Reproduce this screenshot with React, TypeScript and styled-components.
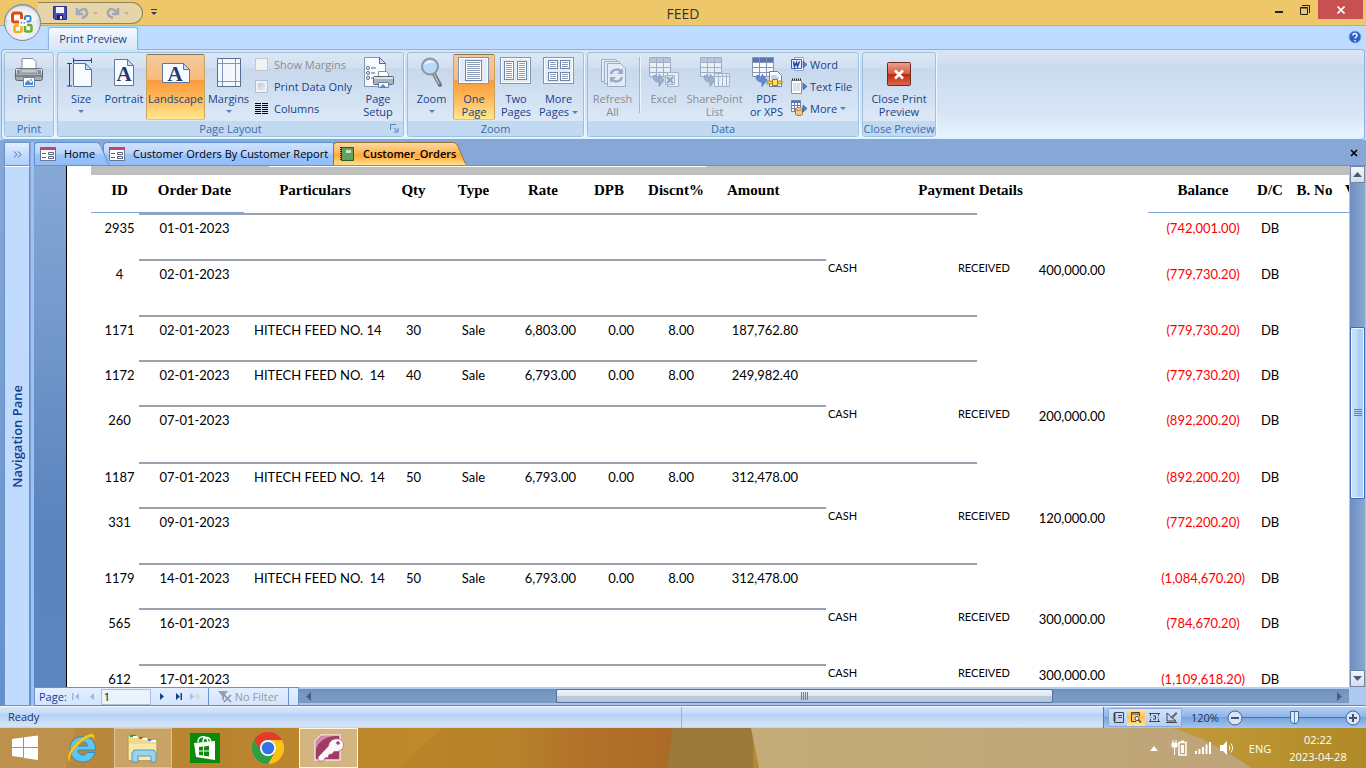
import React from "react";
import styled, { createGlobalStyle, css } from "styled-components";

const GlobalStyle = createGlobalStyle`
  * { box-sizing: border-box; }
  html, body, #root { height: 100%; }
  body { margin: 0; overflow: hidden; font-family: "Open Sans", "Noto Sans", sans-serif; font-size: 11px; line-height: 13px; color: #15428b; }
  button, input { font: inherit; color: inherit; }
  button { border: 0; padding: 0; background: none; white-space: nowrap; }
  svg { display: block; flex: none; }
`;

const Window = styled.div`
  display: flex;
  flex-direction: column;
  height: 100vh;
  background: #bfdbff;
  position: relative;
`;

/* ---------- title bar ---------- */
const TitleBar = styled.header`
  display: grid;
  grid-template-columns: 1fr auto 1fr;
  height: 26px;
  flex: none;
  background: #efc76b;
  border-bottom: 1px solid #c9ab67;
`;
const TitleText = styled.h1`
  margin: 0;
  font-size: 14px;
  line-height: 27px;
  font-weight: 400;
  color: #333;
`;
const QuickBar = styled.div`
  display: flex;
  align-items: flex-start;
  padding: 2px 0 0 38px;
`;
const QuickPill = styled.div`
  display: flex;
  align-items: center;
  gap: 4px;
  width: 105px;
  height: 22px;
  padding-left: 15px;
  background: #e5d5a8;
  border: 1px solid #8c8467;
  border-left: 0;
  border-radius: 0 11px 11px 0;
`;
const QuickMore = styled.button`
  margin: 7px 0 0 8px;
`;
const WindowButtons = styled.div`
  display: flex;
  justify-content: flex-end;
  padding-right: 3px;
`;
const WindowButton = styled.button<{ $close?: boolean }>`
  display: flex;
  align-items: center;
  justify-content: center;
  width: ${(p) => (p.$close ? 45 : 26)}px;
  height: 19px;
  background: ${(p) => (p.$close ? "#c75050" : "none")};
`;
const OfficeButton = styled.button`
  position: absolute;
  left: 3px;
  top: 3px;
`;

/* ---------- ribbon ---------- */
const TabStrip = styled.nav`
  display: flex;
  justify-content: space-between;
  align-items: flex-start;
  height: 23px;
  flex: none;
  padding: 1px 4px 0 48px;
`;
const RibbonTab = styled.button`
  height: 23px;
  width: 90px;
  padding-bottom: 1px;
  background: linear-gradient(#f5faff, #e1ecf9 60%, #dbe6f4);
  border: 1px solid #8db2e3;
  border-bottom: 0;
  border-radius: 3px 3px 0 0;
  box-shadow: 0 0 3px #7fe8ff;
  z-index: 1;
`;
const HelpButton = styled.button`
  margin-top: 3px;
`;
const Ribbon = styled.section`
  display: flex;
  gap: 3px;
  flex: none;
  height: 91px;
  margin: 0 1px 0 1px;
  padding: 2px;
  background: linear-gradient(#dbe6f4, #cfddee 16%, #c9daee 18%, #d8e6f6 75%, #e5f4ff 95%, #d5f3ff);
  border: 1px solid #8db2e3;
  border-bottom-color: #86a9d4;
  border-radius: 4px;
`;
const GroupBox = styled.section<{ $w: number }>`
  display: flex;
  flex-direction: column;
  width: ${(p) => p.$w}px;
  height: 85px;
  border: 1px solid #9fbfdf;
  border-radius: 3px;
  background: linear-gradient(#dde8f5, #d0dff0 18%, #c7d8ed 19%, #dce9f7 85%);
  box-shadow: 1px 1px 0 #eef6ff;
`;
const GroupBody = styled.div`
  display: flex;
  flex: 1;
  padding: 1px 2px 0;
`;
const GroupLabel = styled.h2`
  display: flex;
  align-items: center;
  justify-content: center;
  position: relative;
  margin: 0;
  height: 15px;
  font-size: 11px;
  font-weight: 400;
  white-space: nowrap;
  color: #3e6aaa;
  background: #c1d9f1;
  border-radius: 0 0 2px 2px;
`;
const Launcher = styled.button`
  position: absolute;
  right: 4px;
  top: 3px;
`;
const BigButton = styled.button<{ $w: number; $on?: boolean }>`
  display: flex;
  flex-direction: column;
  align-items: center;
  width: ${(p) => p.$w}px;
  height: 66px;
  padding-top: 1px;
  line-height: 13px;
  border: 1px solid transparent;
  &:disabled { color: #8d8d8d; }
  &:disabled svg { opacity: 0.65; }
  ${(p) =>
    p.$on &&
    css`
      background: linear-gradient(#f2c9a0, #fbb97c 38%, #fb9a3b 40%, #fdc264 75%, #ffe98c);
      border-color: #8b7654 #c9a35b #e8c75d;
      border-radius: 2px;
    `}
`;
const BigLabel = styled.span`
  margin-top: 4px;
  text-align: center;
  svg { display: inline-block; vertical-align: 2px; margin-left: 3px; }
`;
const Stack = styled.div<{ $w: number }>`
  display: flex;
  flex-direction: column;
  width: ${(p) => p.$w}px;
  padding-left: 3px;
`;
const SmallButton = styled.button`
  display: flex;
  align-items: center;
  gap: 3px;
  height: 22px;
  padding-bottom: 2px;
`;
const CheckLabel = styled.label<{ $off?: boolean }>`
  display: flex;
  align-items: center;
  gap: 6px;
  height: 22px;
  padding-bottom: 2px;
  white-space: nowrap;
  color: ${(p) => (p.$off ? "#8d8d8d" : "#15428b")};
`;
const CheckBox = styled.input`
  appearance: none;
  width: 13px;
  height: 13px;
  margin: 0;
  border: 1px solid #abc1de;
  background: linear-gradient(135deg, #b9bec6, #f7f7f7);
  box-shadow: inset 0 0 0 2px #eef1f5;
  &:disabled { background: #f3f3f3; border-color: #c0c8d3; }
`;
const Divider = styled.div`
  width: 1px;
  height: 56px;
  margin: 3px 3px 0 4px;
  background: #9db8d8;
  box-shadow: 1px 0 0 #eef5fc;
`;

/* ---------- work area ---------- */
const Work = styled.main`
  display: flex;
  flex: 1;
  min-height: 0;
  padding: 2px 0 0 4px;
  background: linear-gradient(#87a8d6, #6490c9);
`;
const NavPane = styled.aside`
  display: flex;
  flex-direction: column;
  width: 30px;
  padding-right: 1px;
  border-right: 3px solid #9dc1f5;
`;
const NavToggle = styled.button`
  height: 24px;
  border: 1px solid #6593cf;
  background: linear-gradient(#e3efff, #c4ddff 50%, #aed0ff);
  display: flex;
  align-items: center;
  justify-content: center;
`;
const NavBody = styled.button`
  flex: 1;
  border: 1px solid #6593cf;
  border-top-color: #fff;
  background: #c1dbff;
  font-size: 13px;
  font-weight: 600;
  display: flex;
  align-items: center;
  justify-content: center;
  span { writing-mode: vertical-rl; transform: rotate(180deg); }
`;
const DocColumn = styled.section`
  display: flex;
  flex-direction: column;
  flex: 1;
  min-width: 0;
`;
const DocTabs = styled.nav`
  display: flex;
  height: 24px;
  flex: none;
  background: #87a8d6;
  border-bottom: 1px solid #6593cf;
`;
const DocTab = styled.button<{ $w: number; $active?: boolean }>`
  display: flex;
  align-items: center;
  gap: 8px;
  width: ${(p) => p.$w}px;
  padding: 0 0 1px 5px;
  color: #000;
  z-index: ${(p) => (p.$active ? 2 : 0)};
  font-weight: ${(p) => (p.$active ? 600 : 400)};
  background: ${(p) =>
    p.$active
      ? "linear-gradient(#ffd9a0, #ffb658 45%, #ffa83a 55%, #ffe08a)"
      : "linear-gradient(#cfe2fc, #b9d5fb 45%, #9cc4fa 55%, #92bcf8)"};
  border: 1px solid ${(p) => (p.$active ? "#96703a" : "#5f8fd0")};
  border-width: 1px 0 0 1px;
  border-radius: 4px 0 0 0;
`;
const TabTail = styled.svg<{ $overlap: number }>`
  margin-right: -${(p) => p.$overlap}px;
  z-index: 1;
`;
const DocClose = styled.button`
  margin: 0 8px 1px auto;
`;
const Frame = styled.div`
  display: grid;
  grid-template-columns: 1fr 17px;
  grid-template-rows: 1fr 19px;
  flex: 1;
  min-height: 0;
`;
const Viewport = styled.div`
  overflow: hidden;
  min-width: 0;
  padding-left: 32px;
  background: linear-gradient(#87a8d6, #5a84be 70%, #5c86c0);
`;
const Paper = styled.article`
  height: 100%;
  padding-left: 24px;
  background: #fff;
  border-left: 1px solid #000;
`;
const Band = styled.div`
  height: 9px;
  background: linear-gradient(#fff, #fff) 178px 0 / 437px 1px no-repeat #bfbfbf;
`;

/* ---------- report ---------- */
const Report = styled.table`
  table-layout: fixed;
  width: 1309px;
  border-collapse: separate;
  border-spacing: 0;
  font-family: Lato, sans-serif;
  font-size: 13px;
  line-height: 16px;
  color: #000;
`;
const Head = styled.th<{ $line?: boolean; $align?: string; $pl?: number }>`
  height: 38px;
  padding: 7px 0 0 ${(p) => p.$pl || 0}px;
  vertical-align: top;
  text-align: ${(p) => p.$align || "center"};
  font-family: "Liberation Serif", serif;
  font-size: 15px;
  white-space: nowrap;
  border-bottom: 1px solid ${(p) => (p.$line ? "#7ba7dc" : "#fff")};
`;
const Row = styled.tr<{ $h: number }>`
  height: ${(p) => p.$h}px;
`;
const Cell = styled.td<{ $rule?: boolean; $align?: string; $pl?: number; $pr?: number; $red?: boolean }>`
  padding: 5px ${(p) => p.$pr || 0}px 0 ${(p) => p.$pl || 0}px;
  vertical-align: top;
  text-align: ${(p) => p.$align || "center"};
  white-space: pre;
  color: ${(p) => (p.$red ? "#f00" : "inherit")};
  border-top: 2px solid ${(p) => (p.$rule ? "#9ca1ae" : "transparent")};
`;
const NoteCell = styled.td`
  padding: 1px 5px 0 2px;
  vertical-align: top;
  font-size: 11px;
`;
const Note = styled.div`
  display: flex;
  justify-content: space-between;
`;
const PaidCell = styled.td`
  padding: 3px 10px 0 0;
  vertical-align: top;
  text-align: right;
`;

/* ---------- scroll bars ---------- */
const VScroll = styled.div`
  display: flex;
  flex-direction: column;
  background: linear-gradient(90deg, #6d90c2, #7b9bc8 50%, #89a7d0);
  border: 1px solid #a9c4ec;
  border-width: 0 1px;
`;
const HScroll = styled.div`
  display: flex;
  align-items: center;
  flex: 1;
  background: linear-gradient(#6d90bc, #7a9ac5 50%, #7a9ac5);
  border-top: 2px solid #b5cdf0;
  border-bottom: 2px solid #a9c4ec;
`;
const Corner = styled.div`
  background: #afcaf0;
  border-bottom: 1px solid #5f88bb;
`;
const ScrollButton = styled.button<{ $plain?: boolean }>`
  display: flex;
  align-items: center;
  justify-content: center;
  flex: none;
  width: ${(p) => (p.$plain ? "19px" : "auto")};
  height: 17px;
  ${(p) =>
    !p.$plain &&
    css`
      border: 1px solid #6f83a3;
      background: linear-gradient(#f4f7fb, #d3deec);
    `}
`;
const Space = styled.div<{ $grow: number }>`
  flex: ${(p) => p.$grow} 1 0;
`;
const Thumb = styled.div<{ $grow: number; $hot?: boolean }>`
  display: flex;
  align-items: center;
  justify-content: center;
  flex: ${(p) => p.$grow} 1 0;
  height: 100%;
  border: 1px solid #53709b;
  border-radius: 2px;
  background: linear-gradient(#f3f5f9, #dde5ef 48%, #b9cbe0 52%, #b4c5da);
  ${(p) =>
    p.$hot &&
    css`
      height: auto;
      border-color: #3b6cb7;
      box-shadow: inset 0 0 0 1px #eef5ff;
      background: linear-gradient(90deg, #c9defa, #c4dbfa 48%, #a8cbf8 52%, #b5d4fb);
    `}
`;

/* ---------- record navigator ---------- */
const BottomRow = styled.div`
  display: flex;
  min-width: 0;
  border-bottom: 1px solid #5f88bb;
`;
const PageNav = styled.form`
  display: flex;
  align-items: center;
  width: 265px;
  padding-left: 4px;
  border: 1px solid #6593cf;
  border-width: 1px 1px 0 1px;
  background: linear-gradient(#e3efff, #d3e5ff);
`;
const PageInput = styled.input`
  width: 50px;
  height: 16px;
  margin: 0 3px 0 2px;
  padding: 0 2px;
  color: #000;
  border: 1px solid #abc1de;
  background: #eaf2fb;
`;
const NavIcon = styled.button<{ $w: number }>`
  display: flex;
  align-items: center;
  justify-content: center;
  width: ${(p) => p.$w}px;
  height: 16px;
`;
const Filter = styled.button`
  display: flex;
  align-items: center;
  gap: 3px;
  width: 81px;
  height: 100%;
  margin-left: 4px;
  padding-left: 9px;
  color: #9a9a9a;
  border: 1px solid #6593cf;
  border-width: 0 1px;
`;

/* ---------- status bar ---------- */
const StatusBar = styled.footer`
  display: flex;
  height: 22px;
  flex: none;
  line-height: 20px;
  border-top: 1px solid #f2f7ff;
  background: linear-gradient(#d7e6f9, #c6dcf8 30%, #b3d0f5 34%, #d7e5f7 90%, #b9cfee);
`;
const StatusText = styled.div`
  flex: 1;
  padding-left: 8px;
  color: #1c3564;
  border-right: 1px solid #90b3e0;
`;
const StatusFill = styled.div`
  flex: 0 1 421px;
`;
const StatusTools = styled.div`
  display: flex;
  align-items: center;
  width: 263px;
  padding: 0 5px 0 4px;
  color: #1c3564;
  border-left: 1px solid #567db1;
  background: linear-gradient(#b3d0f5, #8fb5ea 45%, #79a5df 50%, #a5c5ef);
`;
const ViewButtons = styled.div`
  display: flex;
  margin-right: 9px;
  border: 1px solid #86a9d6;
  border-radius: 2px;
`;
const ViewButton = styled.button<{ $on?: boolean }>`
  display: flex;
  align-items: center;
  justify-content: center;
  width: 18px;
  height: 17px;
  background: ${(p) => (p.$on ? "linear-gradient(#ffe3a8, #ffc04f 50%, #ffe69a)" : "linear-gradient(#d2e3fa, #b3cff5)")};
`;
const ZoomSlider = styled.input`
  appearance: none;
  flex: 1;
  min-width: 0;
  height: 14px;
  margin: 0;
  background: linear-gradient(#4f72a4, #4f72a4) center / 100% 1px no-repeat;
  &::-webkit-slider-thumb {
    appearance: none;
    width: 9px;
    height: 13px;
    background: linear-gradient(90deg, #dfeaf8 3px, #5f82b5 3px, #5f82b5 4px, #dfeaf8 4px);
    border: 1px solid #44689c;
    border-radius: 1px 1px 5px 5px;
  }
`;
const ZoomValue = styled.span`
  width: 36px;
`;

/* ---------- task bar ---------- */
const TaskBar = styled.footer`
  position: relative;
  display: flex;
  align-items: stretch;
  height: 40px;
  flex: none;
  overflow: hidden;
  background: #b98730;
`;
const Wallpaper = styled.svg`
  position: absolute;
  inset: 0;
  width: 100%;
  height: 100%;
`;
const TaskButton = styled.button<{ $w: number; $open?: boolean; $active?: boolean }>`
  position: relative;
  display: flex;
  align-items: center;
  justify-content: center;
  width: ${(p) => p.$w}px;
  border: 1px solid ${(p) => (p.$active ? "#fff6df" : p.$open ? "#dcc49a" : "transparent")};
  background: ${(p) => (p.$active ? "#d2b580" : p.$open ? "#c9a468" : "none")};
`;
const Tray = styled.div`
  position: relative;
  display: flex;
  align-items: center;
  margin-left: auto;
  padding-right: 19px;
  color: #fff;
`;
const TrayItem = styled.button<{ $w: number }>`
  display: flex;
  justify-content: center;
  width: ${(p) => p.$w}px;
`;
const Clock = styled.time`
  width: 58px;
  margin-left: 9px;
  text-align: center;
  line-height: 17px;
  white-space: nowrap;
`;

/* ---------- icons ---------- */
const Down = ({ w = 6, c = "#5a7fb5" }: { w?: number; c?: string }) => (
  <svg width={w} height="3" viewBox="0 0 6 3"><path d="M0 0h6L3 3z" fill={c} /></svg>
);
const Orb = () => (
  <svg width="39" height="39" viewBox="0 0 39 39">
    <defs>
      <radialGradient id="orb" cx="50%" cy="65%" r="65%">
        <stop offset="0" stopColor="#fff" /><stop offset=".65" stopColor="#e6e9ee" /><stop offset="1" stopColor="#a9b1bf" />
      </radialGradient>
    </defs>
    <circle cx="19.5" cy="19.5" r="18" fill="url(#orb)" stroke="#7b8798" />
    <path d="M3 16a17 17 0 0 1 33 0c-9 4-24 4-33 0z" fill="#fff" opacity=".6" />
    <g fill="none">
      <path d="M16 19h-4.500a2 2 0 0 1-2-2v-4.500a2.500 2.500 0 0 1 2.500-2.500h4.500a2 2 0 0 1 2 2V16" stroke="#dc4a15" strokeWidth="3" />
      <path d="M18.500 23v4.500a1.500 1.500 0 0 1-1.500 1.500h-4a1.500 1.500 0 0 1-1.500-1.500V24a1.500 1.500 0 0 1 1.500-1.500h3" stroke="#f0b018" strokeWidth="2.500" />
      <path d="M22 23v4a1.500 1.500 0 0 0 1.500 1.500H27a1.500 1.500 0 0 0 1.500-1.500v-3.500a1.500 1.500 0 0 0-1.500-1.500h-3" stroke="#6bab35" strokeWidth="2.500" />
      <path d="M22 17v-2.500a1.500 1.500 0 0 1 1.500-1.500H26a1.500 1.500 0 0 1 1.500 1.500V17a1.500 1.500 0 0 1-1.500 1.500h-2.500" stroke="#3c88d0" strokeWidth="2" />
    </g>
    <path d="M17.500 19h1.500v1.500h-1.500zM20.500 19H22v1.500h-1.500z" fill="#4d90d0" />
  </svg>
);
const Save = () => (
  <svg width="14" height="14" viewBox="0 0 14 14">
    <path d="M.5.5h13v13H2L.5 12z" fill="#4a4fb8" stroke="#2c2f83" />
    <path d="M3 1h8v6H3z" fill="#eef2fb" /><path d="M4 9h6v4H4z" fill="#1f2160" /><path d="M7 10h2v3H7z" fill="#fff" />
  </svg>
);
const Undo = ({ flip }: { flip?: boolean }) => (
  <svg width="14" height="14" viewBox="0 0 14 14">
    <g transform={flip ? "matrix(-1 0 0 1 14 0)" : undefined} fill="none" stroke="#9ea8b6" strokeWidth="2.500">
      <path d="M2 2v6h6" />
      <path d="M3 7c3-5 8-5 9-1 .5 3-2 5-5 6" />
    </g>
  </svg>
);
const Printer = () => (
  <svg width="32" height="32" viewBox="0 0 32 32">
    <path d="M9 2.500h11l3 3v9H9z" fill="#fff" stroke="#8390a3" />
    <rect x="2.500" y="12.500" width="27" height="12" rx="2" fill="#a8adb4" stroke="#5e6670" />
    <path d="M3 13h26v4H3z" fill="#dfe2e6" /><path d="M8 13h16v4H8z" fill="#c5c9cf" stroke="#8a9099" />
    <path d="M3 19h26v2H3z" fill="#7d848d" />
    <path d="M4 14h3v4H4zM25 14h3v4h-3z" fill="#858c95" />
    <path d="M10.500 21.500h11v9h-11z" fill="#f4faff" stroke="#6483ad" />
    <path d="M12 27l3-3 3 3 2-2v4h-8z" fill="#4a8bd5" /><circle cx="18" cy="24" r="1" fill="#e47b40" />
  </svg>
);
const SizeIcon = () => (
  <svg width="32" height="32" viewBox="0 0 32 32">
    <path d="M8.500 7.500h12l6 6v17h-18z" fill="#f8fbff" stroke="#5f7799" /><path d="M20.500 7.500v6h6z" fill="#c9dcf3" stroke="#5f7799" />
    <path d="M8 4.500h19M8.500 2v5M26.500 2v5M4.500 7v23M2 7.500h5M2 30h5" stroke="#2b3f8e" fill="none" />
  </svg>
);
const LetterA = ({ x, y }: { x: number; y: number }) => (
  <text x={x} y={y} textAnchor="middle" fontFamily="Liberation Serif, serif" fontWeight="700" fontSize="21" fill="#253a70">A</text>
);
const PortraitIcon = () => (
  <svg width="32" height="32" viewBox="0 0 32 32">
    <path d="M6.500 3.500h13l6 6v20h-19z" fill="#f8fbff" stroke="#5f7799" /><path d="M19.500 3.500v6h6z" fill="#c9dcf3" stroke="#5f7799" />
    <LetterA x={16} y={25} />
  </svg>
);
const LandscapeIcon = () => (
  <svg width="32" height="32" viewBox="0 0 32 32">
    <path d="M2.500 7.500h21l6 6v13h-27z" fill="#f8fbff" stroke="#5f7799" /><path d="M23.500 7.500v6h6z" fill="#c9dcf3" stroke="#5f7799" />
    <LetterA x={15} y={25} />
  </svg>
);
const MarginsIcon = () => (
  <svg width="32" height="32" viewBox="0 0 32 32">
    <path d="M4.500 2.500h23v28h-23z" fill="#f4f8fe" stroke="#566f96" />
    <path d="M9.500 3v27M22.500 3v27M5 7.500h22M5 25.500h22" stroke="#7f97bb" />
  </svg>
);
const SetupIcon = () => (
  <svg width="32" height="32" viewBox="0 0 32 32">
    <path d="M2.500 1.500h15l6 6v23h-21z" fill="#f8fbff" stroke="#8495ae" /><path d="M17.500 1.500v6h6z" fill="#d4e2f4" stroke="#52688c" />
    <g fill="#fff" stroke="#4f6587"><circle cx="6" cy="12" r="1.500" /><circle cx="6" cy="17" r="1.500" /><circle cx="6" cy="22" r="1.500" /></g>
    <path d="M9 12h5M9 17h4M9 22h2" stroke="#52688c" />
    <path d="M16.500 15.500h8l2 2v5h-10z" fill="#fff" stroke="#8390a3" />
    <rect x="11.500" y="20.500" width="20" height="8" rx="1" fill="#aeb3ba" stroke="#5e6670" />
    <path d="M12 21h19v2H12z" fill="#dfe2e6" /><path d="M16.500 26.500h10v5h-10z" fill="#f4faff" stroke="#6483ad" />
    <path d="M18 31l3-3 3 3z" fill="#4a8bd5" />
  </svg>
);
const ZoomIcon = () => (
  <svg width="32" height="32" viewBox="0 0 32 32">
    <path d="M18 18l6 11" stroke="#6f7780" strokeWidth="4" strokeLinecap="round" /><path d="M18 18l5 10" stroke="#b9bec5" strokeWidth="1.500" />
    <circle cx="14" cy="10.500" r="8" fill="#b8dcf8" stroke="#8993a3" strokeWidth="2" />
    <path d="M8.500 9c1-4 7-6 10-2-4-1-7 0-10 2z" fill="#fff" opacity=".8" />
  </svg>
);
const MiniPage = ({ x, y, w, h }: { x: number; y: number; w: number; h: number }) => (
  <g>
    <rect x={x + 0.5} y={y + 0.5} width={w} height={h} fill="#fff" stroke="#6f87ac" />
    {Array.from({ length: Math.floor((h - 2) / 2) }, (_, i) => (
      <path key={i} d={`M${x + 2} ${y + 2.5 + i * 2}h${w - 3}`} stroke="#8c9cb8" />
    ))}
  </g>
);
const PagesIcon = ({ kind }: { kind: 1 | 2 | 4 }) => (
  <svg width="32" height="32" viewBox="0 0 32 32">
    <rect x="0.500" y="1.500" width="30" height="26" fill="#e3ebf6" stroke="#7e95b8" />
    <rect x="1.500" y="2.500" width="28" height="24" fill="none" stroke="#fff" />
    {kind === 1 && <MiniPage x={7} y={4} w={16} h={20} />}
    {kind === 2 && <><MiniPage x={4} y={5} w={9} h={18} /><MiniPage x={17} y={5} w={9} h={18} /></>}
    {kind === 4 && <><MiniPage x={5} y={4} w={9} h={8} /><MiniPage x={17} y={4} w={9} h={8} /><MiniPage x={5} y={16} w={9} h={8} /><MiniPage x={17} y={16} w={9} h={8} /></>}
  </svg>
);
const RefreshIcon = () => (
  <svg width="32" height="32" viewBox="0 0 32 32">
    <g fill="#eef3f9" stroke="#7f93b0">
      <path d="M4.500 3.500h14l4 4v18h-18z" /><path d="M7.500 5.500h14l4 4v18h-18z" /><path d="M10.500 7.500h13l5 5v18h-18z" />
    </g>
    <g fill="none" stroke="#7d92b4" strokeWidth="2.500"><path d="M14 18c1-5 8-6 10-2M25 21c-1 5-8 6-10 2" /></g>
    <path d="M26 12v6h-6zM13 27v-6h6z" fill="#7d92b4" />
  </svg>
);
const Grid = ({ head = "#a9b2c4" }: { head?: string }) => (
  <g>
    <path d="M1.500 1.500h21v19h-21z" fill="#f6f9fd" stroke="#8795b0" /><path d="M2 2h20v4H2z" fill={head} />
    <path d="M1.500 6.500h21M1.500 11.500h21M1.500 16.500h21M8.500 2v18M15.500 2v18" stroke="#8795b0" />
  </g>
);
const Arrow = ({ c }: { c: string }) => (
  <path d="M5 20c0 4 2 6 6 6v4.500l5-6.500-5-6v4c-2 0-3-1-3-3z" fill={c} stroke="#5a73a5" strokeWidth=".7" />
);
const ExcelIcon = () => (
  <svg width="32" height="32" viewBox="0 0 32 32">
    <Grid /><Arrow c="#8398bd" /><path d="M19.500 16.500h11v14h-11z" fill="#f7f9fb" stroke="#909eb3" />
    <path d="M17.500 19.500h9v9h-9z" fill="#e8edf3" stroke="#909eb3" /><path d="M19 21l6 6M25 21l-6 6" stroke="#76869d" strokeWidth="2" />
  </svg>
);
const ShareIcon = () => (
  <svg width="32" height="32" viewBox="0 0 32 32">
    <Grid /><Arrow c="#8398bd" /><path d="M15.500 17.500h15v13h-15z" fill="#f7f9fb" stroke="#909eb3" />
    <path d="M15.500 20.500h15M19.500 18v12M23.500 18v12M27.500 18v12" stroke="#909eb3" />
  </svg>
);
const PdfIcon = () => (
  <svg width="32" height="32" viewBox="0 0 32 32">
    <Grid head="#5874b4" /><Arrow c="#5c8be0" />
    <path d="M18.500 15.500h8l4 4v11h-12z" fill="#fff" stroke="#6b7f9f" /><path d="M20 20h6M20 22h8" stroke="#9aa9c0" />
    <path d="M16 25h15v3H16z" fill="#f4c63b" stroke="#a87b10" strokeWidth=".8" /><rect x="21.500" y="23.500" width="5" height="6" fill="#ffdf6b" stroke="#a87b10" />
  </svg>
);
const BlueTip = () => <path d="M12 5l4 3.500-4 3.500z" fill="#4c7fd8" stroke="#274f9c" strokeWidth=".6" />;
const WordIcon = () => (
  <svg width="16" height="16" viewBox="0 0 16 16">
    <path d="M3.500 1.500h9v13h-9z" fill="#fff" stroke="#8ea3c5" /><path d="M.5 3.500h10v9H.5z" fill="#e8effb" stroke="#3b62b0" />
    <path d="M2.500 5.500l1 5 2-4 1 4 2-5" fill="none" stroke="#1f49a4" strokeWidth="1.500" /><BlueTip />
  </svg>
);
const TextIcon = () => (
  <svg width="16" height="16" viewBox="0 0 16 16">
    <path d="M.5 2.500h10v13H.5z" fill="#fff" stroke="#8a93a5" /><path d="M1 1.500h10" stroke="#222" strokeWidth="2" strokeDasharray="1 1" />
    <path d="M2 6h7M2 8h7M2 10h7M2 12h7" stroke="#a9b5ca" strokeWidth=".8" /><BlueTip />
  </svg>
);
const MoreIcon = () => (
  <svg width="16" height="16" viewBox="0 0 16 16">
    <path d="M.5.5h9v11h-9z" fill="#fff" stroke="#6d82a8" /><path d="M1 1h8v2H1z" fill="#5874b4" /><path d="M1 5.500h8M1 8.500h8M3.500 1v10M6.500 1v10" stroke="#6d82a8" />
    <path d="M4.500 9v5c0 2 7 2 7 0V9z" fill="#f0c680" stroke="#a9782c" /><ellipse cx="8" cy="9" rx="3.500" ry="1.300" fill="#fbe3b4" stroke="#a9782c" /><BlueTip />
  </svg>
);
const ColumnsIcon = () => (
  <svg width="13" height="13" viewBox="0 0 13 13"><path d="M0 1.500h6M7 1.500h6M0 3.500h6M7 3.500h6M0 5.500h6M7 5.500h6M0 7.500h6M7 7.500h6M0 9.500h6M7 9.500h6M0 11.500h6M7 11.500h6" stroke="#000" /></svg>
);
const CloseIcon = () => (
  <svg width="32" height="32" viewBox="0 0 32 32">
    <defs><linearGradient id="cls" x2="0" y2="1"><stop offset="0" stopColor="#eba394" /><stop offset=".5" stopColor="#d9583f" /><stop offset=".52" stopColor="#bd2a12" /><stop offset="1" stopColor="#dd6a4c" /></linearGradient></defs>
    <rect x="4.500" y="6.500" width="23" height="23" rx="1" fill="url(#cls)" stroke="#6b2a23" />
    <path d="M12 14.500l8 8M20 14.500l-8 8" stroke="#fff" strokeWidth="2.500" />
  </svg>
);
const FormIcon = () => (
  <svg width="16" height="16" viewBox="0 0 16 16">
    <path d="M.5 1.500h15v13H.5z" fill="#fff" stroke="#67758f" /><path d="M0 1h16v3H0z" fill="#c4426b" />
    <path d="M2 7.500h4M2 11.500h4" stroke="#56657f" /><path d="M8.500 6.500h5v2h-5zM8.500 10.500h5v2h-5z" fill="none" stroke="#56657f" />
  </svg>
);
const BookIcon = () => (
  <svg width="16" height="16" viewBox="0 0 16 16">
    <path d="M2.500 1.500h12v13h-12z" fill="#5fa160" stroke="#2e5b33" /><path d="M2 1v14" stroke="#1d2b1d" strokeWidth="2" strokeDasharray="1 1" />
    <path d="M7 4h5v3H7z" fill="#c9e6c3" />
  </svg>
);
const OneDoc = () => (
  <svg width="11" height="11" viewBox="0 0 11 11"><path d="M1.500.5h9v10h-9z" fill="none" stroke="#444" /><path d="M0 2h3M0 4h3M0 6h3M0 8h3M5 3.500h4M5 5.500h4" stroke="#444" /></svg>
);
const PreviewDoc = () => (
  <svg width="12" height="11" viewBox="0 0 12 11"><path d="M6 9.500H1.500v-9h8V4" fill="none" stroke="#444" /><path d="M1 2h8" stroke="#444" /><circle cx="7" cy="6.500" r="2" fill="#fff" stroke="#444" /><path d="M8.500 8l2.500 2.500" stroke="#444" strokeWidth="1.500" /></svg>
);
const LayoutDoc = () => (
  <svg width="11" height="11" viewBox="0 0 11 11"><path d="M1.500 1v3M9.500 1v3M1.500 7v3M9.500 7v3M0 1.500h11M0 9.500h11M4 4h3M6.500 4v3M4 7h3M1.500 5.500h1M8.500 5.500h1" fill="none" stroke="#444" /></svg>
);
const DesignDoc = () => (
  <svg width="12" height="11" viewBox="0 0 12 11"><path d="M1 1v8h9z" fill="none" stroke="#444" /><path d="M4 6l6-6 1.500 1.500-5 5z" fill="#666" /><path d="M0 10.500h11" stroke="#444" /></svg>
);
const RoundSign = ({ plus }: { plus?: boolean }) => (
  <svg width="16" height="16" viewBox="0 0 16 16"><circle cx="8" cy="8" r="7" fill="#d8e5f6" stroke="#44618f" /><path d={plus ? "M4 8h8M8 4v8" : "M4 8h8"} stroke="#3f5478" strokeWidth="2" /></svg>
);
const Grip = ({ vertical }: { vertical?: boolean }) => (
  <svg width="8" height="8" viewBox="0 0 8 8"><path d={vertical ? "M0 .5h8M0 2.500h8M0 4.500h8M0 6.500h8" : "M.5 0v8M2.500 0v8M4.500 0v8M6.500 0v8"} stroke="#6a7f9e" /></svg>
);
const Tri = ({ d, c = "#4a5c7c" }: { d: string; c?: string }) => <svg width="9" height="9" viewBox="0 0 9 9"><path d={d} fill={c} /></svg>;

const Tail = ({ active, overlap = 7 }: { active?: boolean; overlap?: number }) => (
  <TabTail $overlap={overlap} width="14" height="23" viewBox="0 0 14 23">
    <defs>
      <linearGradient id={active ? "tl1" : "tl0"} x2="0" y2="1">
        <stop offset="0" stopColor={active ? "#ffd9a0" : "#cfe2fc"} />
        <stop offset=".45" stopColor={active ? "#ffb658" : "#b9d5fb"} />
        <stop offset=".55" stopColor={active ? "#ffa83a" : "#9cc4fa"} />
        <stop offset="1" stopColor={active ? "#ffe08a" : "#92bcf8"} />
      </linearGradient>
    </defs>
    <path d="M0 .5c3 0 4 2 5 4l6 14c1 3 2 4 3 4.500H0z" fill={`url(#${active ? "tl1" : "tl0"})`} />
    <path d="M0 .5c3 0 4 2 5 4l6 14c1 3 2 4 3 4.500" fill="none" stroke={active ? "#96703a" : "#5f8fd0"} />
  </TabTail>
);

const WinLogo = () => (
  <svg width="28" height="26" viewBox="0 0 28 26"><path d="M1 4l11-1.500V12H1zM13 2.300L27 .5V12H13zM1 13h11v9.500L1 21zM13 13h14v12l-14-2z" fill="#fff" /></svg>
);
const IeIcon = () => (
  <svg width="32" height="32" viewBox="0 0 32 32">
    <path d="M29.500 18H12c0 3 2 5 5 5 2 0 3-1 4-2.500h8C27 27 22 30 17 30 9 30 4 24 4 17S9 4.500 17 4.500s12.500 5.500 12.500 13.500zm-8-4c0-3-2-4-4.500-4s-5 2-5 4z" fill="#5ec6f0" stroke="#1d83bd" strokeWidth=".8" />
    <path d="M5 30c-5-1-4-9 3-17C15 5 26-1 28 3c1 2 0 4-1 6 1-4-1-5-5-3C15 9 5 20 4 26c0 2 0 3 1 4z" fill="#f8c521" stroke="#c98f0c" strokeWidth=".5" />
  </svg>
);
const FolderIcon = () => (
  <svg width="34" height="32" viewBox="0 0 34 32">
    <path d="M2 3h10l1 2h9l1 3h8v20H2z" fill="#efd98c" stroke="#b79a4d" />
    <path d="M4 3h6v2H4z" fill="#1f9e4a" /><path d="M13 5h4v2h-4z" fill="#d9472b" /><path d="M22 7h4v2h-4z" fill="#3f86d6" />
    <path d="M7 4h4v2H7zM16 6h5v2h-5zM25 8h5v2h-5z" fill="#fff" />
    <path d="M3 12h27v16H3z" fill="#f8e9ab" />
    <path d="M8 18h20l2 3v9h-5v-6H12v6H6v-9z" fill="#9bd3ee" stroke="#5299c0" />
  </svg>
);
const StoreIcon = () => (
  <svg width="30" height="30" viewBox="0 0 30 30">
    <path d="M0 0h30v30H0z" fill="#0c8a0c" /><path d="M4 10l21-2v19L6 24z" fill="#fff" />
    <path d="M8 9c0-7 9-7 10 0M13 9c0-6 7-6 8 0" fill="none" stroke="#fff" strokeWidth="1.500" />
    <path d="M9 14l4-.5v4H9zM14 13.400l5-.6v4.700h-5zM9 18.500h4v4l-4-.5zM14 18.500h5v5l-5-.7z" fill="#0c8a0c" />
  </svg>
);
const ChromeIcon = () => (
  <svg width="32" height="32" viewBox="0 0 32 32">
    <path d="M2.140 8A16 16 0 0 1 29.860 8H16a8 8 0 0 0-6.930 12z" fill="#e33b2e" />
    <path d="M29.860 8A16 16 0 0 1 16 32l6.930-12A8 8 0 0 0 16 8z" fill="#fbc116" />
    <path d="M16 32A16 16 0 0 1 2.140 8l6.930 12A8 8 0 0 0 22.930 20z" fill="#2d9f47" />
    <circle cx="16" cy="16" r="8" fill="#fff" /><circle cx="16" cy="16" r="6.300" fill="#2f75e8" />
  </svg>
);
const AccessIcon = () => (
  <svg width="32" height="30" viewBox="0 0 32 30">
    <path d="M8 2h19v25H2V8z" fill="#a13a66" stroke="#f3dbe4" strokeWidth="1.500" /><path d="M3 16C6 8 12 4 22 3H8.500L3 8.500z" fill="#d28aa8" />
    <path d="M22 6c5-1 9 2 8.500 6.500S26 19 21 18.500l-2 2.500-3 .5-1 3-3 .5-1.500 3H5.500l-.5-4 10.500-11C16 9 18.500 6.500 22 6z" fill="#fdf6f8" stroke="#8a5068" strokeWidth=".6" />
    <circle cx="25" cy="10" r="1.800" fill="#a13a66" />
  </svg>
);

/* ---------- data ---------- */
type Entry = {
  h: number; id: string; date: string; balance: string;
  item?: string; qty?: string; rate?: string; amount?: string; paid?: string;
};
const entries: Entry[] = [
  { h: 46, id: "2935", date: "01-01-2023", balance: "(742,001.00)" },
  { h: 56, id: "4", date: "02-01-2023", balance: "(779,730.20)", paid: "400,000.00" },
  { h: 45, id: "1171", date: "02-01-2023", balance: "(779,730.20)", item: "HITECH FEED NO. 14", qty: "30", rate: "6,803.00", amount: "187,762.80" },
  { h: 45, id: "1172", date: "02-01-2023", balance: "(779,730.20)", item: "HITECH FEED NO.  14", qty: "40", rate: "6,793.00", amount: "249,982.40" },
  { h: 57, id: "260", date: "07-01-2023", balance: "(892,200.20)", paid: "200,000.00" },
  { h: 45, id: "1187", date: "07-01-2023", balance: "(892,200.20)", item: "HITECH FEED NO.  14", qty: "50", rate: "6,793.00", amount: "312,478.00" },
  { h: 56, id: "331", date: "09-01-2023", balance: "(772,200.20)", paid: "120,000.00" },
  { h: 45, id: "1179", date: "14-01-2023", balance: "(1,084,670.20)", item: "HITECH FEED NO.  14", qty: "50", rate: "6,793.00", amount: "312,478.00" },
  { h: 56, id: "565", date: "16-01-2023", balance: "(784,670.20)", paid: "300,000.00" },
  { h: 56, id: "612", date: "17-01-2023", balance: "(1,109,618.20)", paid: "300,000.00" },
];
const columnWidths = [48, 105, 142, 55, 65, 74, 58, 76, 112, 151, 38, 100, 33, 106, 32, 57, 57];

const Group = ({ w, label, children, launcher }: { w: number; label: string; children: React.ReactNode; launcher?: boolean }) => (
  <GroupBox $w={w}>
    <GroupBody>{children}</GroupBody>
    <GroupLabel>
      {label}
      {launcher && (
        <Launcher aria-label="Page setup options">
          <svg width="9" height="9" viewBox="0 0 9 9"><path d="M.5 6V.5H6M4 4l3 3M8 4v4H4" fill="none" stroke="#5a7fb5" /></svg>
        </Launcher>
      )}
    </GroupLabel>
  </GroupBox>
);
type BigProps = { w: number; icon: React.ReactNode; lines: string[]; on?: boolean; disabled?: boolean; arrow?: boolean };
const Big = ({ w, icon, lines, on, disabled, arrow }: BigProps) => (
  <BigButton $w={w} $on={on} disabled={disabled}>
    {icon}
    <BigLabel>
      {lines[0]}
      {lines[1] && <><br />{lines[1]}{arrow && <Down />}</>}
    </BigLabel>
    {arrow && !lines[1] && <svg width="6" height="9" viewBox="0 0 6 9"><path d="M0 5h6L3 8z" fill="#5a7fb5" /></svg>}
  </BigButton>
);

export default function App() {
  return (
    <Window>
      <GlobalStyle />
      <TitleBar>
        <QuickBar>
          <QuickPill>
            <button aria-label="Save"><Save /></button>
            <span />
            <button aria-label="Undo"><Undo /></button>
            <Down w={5} c="#b5ad94" />
            <span />
            <button aria-label="Redo"><Undo flip /></button>
            <Down w={5} c="#b5ad94" />
          </QuickPill>
          <QuickMore aria-label="Customize toolbar">
            <svg width="6" height="7" viewBox="0 0 6 7"><path d="M0 .5h6" stroke="#2a3c66" /><path d="M0 3h6L3 6z" fill="#2a3c66" /></svg>
          </QuickMore>
        </QuickBar>
        <TitleText>FEED</TitleText>
        <WindowButtons>
          <WindowButton aria-label="Minimize"><svg width="8" height="8" viewBox="0 0 8 8"><path d="M0 6h8" stroke="#222" strokeWidth="2" /></svg></WindowButton>
          <WindowButton aria-label="Restore"><svg width="10" height="10" viewBox="0 0 10 10"><path d="M.5 2.500h7v7h-7zM0 3h8M2 .5h7.500V8" fill="none" stroke="#222" /></svg></WindowButton>
          <WindowButton $close aria-label="Close"><svg width="8" height="8" viewBox="0 0 8 8"><path d="M.5.5l7 7M7.500.5l-7 7" stroke="#fff" strokeWidth="1.600" /></svg></WindowButton>
        </WindowButtons>
      </TitleBar>
      <OfficeButton aria-label="Office menu"><Orb /></OfficeButton>

      <TabStrip>
        <RibbonTab>Print Preview</RibbonTab>
        <HelpButton aria-label="Help">
          <svg width="14" height="14" viewBox="0 0 14 14"><circle cx="7" cy="7" r="6" fill="#2c62c9" stroke="#8aa7dc" /><path d="M5 5.500C5 3 9 3 9 5.300 9 7 7 7 7 8.500M7 10v1.200" fill="none" stroke="#fff" strokeWidth="1.500" /></svg>
        </HelpButton>
      </TabStrip>

      <Ribbon>
        <Group w={50} label="Print"><Big w={44} icon={<Printer />} lines={["Print"]} /></Group>
        <Group w={347} label="Page Layout" launcher>
          <Big w={42} icon={<SizeIcon />} lines={["Size"]} arrow />
          <Big w={44} icon={<PortraitIcon />} lines={["Portrait"]} />
          <Big w={59} icon={<LandscapeIcon />} lines={["Landscape"]} on />
          <Big w={47} icon={<MarginsIcon />} lines={["Margins"]} arrow />
          <Stack $w={106}>
            <CheckLabel $off><CheckBox type="checkbox" disabled />Show Margins</CheckLabel>
            <CheckLabel><CheckBox type="checkbox" />Print Data Only</CheckLabel>
            <CheckLabel as="button"><ColumnsIcon />Columns</CheckLabel>
          </Stack>
          <Big w={40} icon={<SetupIcon />} lines={["Page", "Setup"]} />
        </Group>
        <Group w={177} label="Zoom">
          <Big w={43} icon={<ZoomIcon />} lines={["Zoom"]} arrow />
          <Big w={42} icon={<PagesIcon kind={1} />} lines={["One", "Page"]} on />
          <Big w={42} icon={<PagesIcon kind={2} />} lines={["Two", "Pages"]} />
          <Big w={43} icon={<PagesIcon kind={4} />} lines={["More", "Pages"]} arrow />
        </Group>
        <Group w={272} label="Data">
          <Big w={45} icon={<RefreshIcon />} lines={["Refresh", "All"]} disabled />
          <Divider />
          <Big w={41} icon={<ExcelIcon />} lines={["Excel"]} disabled />
          <Big w={61} icon={<ShareIcon />} lines={["SharePoint", "List"]} disabled />
          <Big w={43} icon={<PdfIcon />} lines={["PDF", "or XPS"]} />
          <Stack $w={65}>
            <SmallButton><WordIcon />Word</SmallButton>
            <SmallButton><TextIcon />Text File</SmallButton>
            <SmallButton><MoreIcon />More <Down /></SmallButton>
          </Stack>
        </Group>
        <Group w={74} label="Close Preview"><Big w={68} icon={<CloseIcon />} lines={["Close Print", "Preview"]} /></Group>
      </Ribbon>

      <Work>
        <NavPane>
          <NavToggle aria-label="Open navigation pane">
            <svg width="9" height="7" viewBox="0 0 9 7"><path d="M1 .5l3 3-3 3M5 .5l3 3-3 3" fill="none" stroke="#3f68a8" /></svg>
          </NavToggle>
          <NavBody><span>Navigation Pane</span></NavBody>
        </NavPane>
        <DocColumn>
          <DocTabs>
            <DocTab $w={62}><FormIcon />Home</DocTab><Tail />
            <DocTab $w={228}><FormIcon />Customer Orders By Customer Report</DocTab><Tail overlap={12} />
            <DocTab $w={120} $active><BookIcon />Customer_Orders</DocTab><Tail active />
            <DocClose aria-label="Close document"><svg width="8" height="8" viewBox="0 0 8 8"><path d="M1 1l6 6M7 1L1 7" stroke="#000" strokeWidth="1.600" /></svg></DocClose>
          </DocTabs>
          <Frame>
            <Viewport>
              <Paper>
                <Band />
                <Report>
                  <colgroup>{columnWidths.map((w, i) => <col key={i} style={{ width: w }} />)}</colgroup>
                  <thead>
                    <tr>
                      <Head $line $pl={9}>ID</Head>
                      <Head $line $pl={6}>Order Date</Head>
                      <Head>Particulars</Head>
                      <Head>Qty</Head>
                      <Head>Type</Head>
                      <Head>Rate</Head>
                      <Head>DPB</Head>
                      <Head>Discnt%</Head>
                      <Head $align="left" $pl={13}>Amount</Head>
                      <Head colSpan={3}>Payment Details</Head>
                      <Head />
                      <Head $line $pl={4}>Balance</Head>
                      <Head $line>D/C</Head>
                      <Head $line>B. No</Head>
                      <Head $line $align="left" $pl={2}>V</Head>
                    </tr>
                  </thead>
                  <tbody>
                    {entries.map((e) => (
                      <Row key={e.id} $h={e.h}>
                        <Cell $pl={9}>{e.id}</Cell>
                        <Cell $rule $pl={6}>{e.date}</Cell>
                        <Cell $rule $align="left" $pl={10}>{e.item}</Cell>
                        <Cell $rule>{e.qty}</Cell>
                        <Cell $rule>{e.item && "Sale"}</Cell>
                        <Cell $rule $align="right" $pr={4}>{e.rate}</Cell>
                        <Cell $rule $align="right" $pr={4}>{e.item && "0.00"}</Cell>
                        <Cell $rule $align="right" $pr={20}>{e.item && "8.00"}</Cell>
                        <Cell $rule $align="right" $pr={28}>{e.amount}</Cell>
                        {e.paid ? (
                          <NoteCell colSpan={2}><Note><span>CASH</span><span>RECEIVED</span></Note></NoteCell>
                        ) : (
                          <><Cell $rule /><Cell /></>
                        )}
                        <PaidCell>{e.paid}</PaidCell>
                        <Cell />
                        <Cell $red $pl={4}>{e.balance}</Cell>
                        <Cell>DB</Cell>
                        <Cell />
                        <Cell />
                      </Row>
                    ))}
                  </tbody>
                </Report>
              </Paper>
            </Viewport>
            <VScroll>
              <ScrollButton aria-label="Scroll up"><Tri d="M0 7h9L4.500 2z" /></ScrollButton>
              <Space $grow={145} />
              <Thumb $grow={170} $hot><Grip vertical /></Thumb>
              <Space $grow={172} />
              <ScrollButton aria-label="Scroll down"><Tri d="M0 2h9L4.500 7z" /></ScrollButton>
            </VScroll>
            <BottomRow>
              <PageNav>
                <label htmlFor="page">Page:</label>
                <NavIcon type="button" $w={20} aria-label="First page"><Tri d="M0 1h1.500v7H0zM7 1v7L3 4.500z" c="#9db7dd" /></NavIcon>
                <NavIcon type="button" $w={12} aria-label="Previous page"><Tri d="M6 1v7L2 4.500z" c="#9db7dd" /></NavIcon>
                <PageInput id="page" defaultValue="1" />
                <NavIcon type="button" $w={16} aria-label="Next page"><Tri d="M3 1v7l4-3.500z" c="#15428b" /></NavIcon>
                <NavIcon type="button" $w={17} aria-label="Last page"><Tri d="M2 1v7l4-3.500zM6.500 1H8v7H6.500z" c="#15428b" /></NavIcon>
                <NavIcon type="button" $w={17} aria-label="New record">
                  <svg width="11" height="9" viewBox="0 0 11 9"><path d="M0 1v7l4-3.500z" fill="#a9c1e4" /><path d="M7.500 1v7M4.500 4.500h6M5 2l5 5M10 2L5 7" stroke="#e5d9a5" /></svg>
                </NavIcon>
                <Filter type="button">
                  <svg width="14" height="12" viewBox="0 0 14 12"><path d="M0 0h10L6 5v5L4 8V5z" fill="#9aa0a8" /><path d="M6 4l7 7M13 4l-7 7" stroke="#8a8f98" strokeWidth="1.500" /></svg>
                  No Filter
                </Filter>
              </PageNav>
              <HScroll>
                <ScrollButton $plain aria-label="Scroll left"><Tri d="M7 0v9L2 4.500z" /></ScrollButton>
                <Space $grow={239} />
                <Thumb $grow={496}><Grip /></Thumb>
                <Space $grow={278} />
                <ScrollButton $plain aria-label="Scroll right"><Tri d="M2 0v9l5-4.500z" /></ScrollButton>
              </HScroll>
            </BottomRow>
            <Corner />
          </Frame>
        </DocColumn>
      </Work>

      <StatusBar>
        <StatusText>Ready</StatusText>
        <StatusFill />
        <StatusTools>
          <ViewButtons>
            <ViewButton aria-label="Report view"><OneDoc /></ViewButton>
            <ViewButton $on aria-label="Print preview"><PreviewDoc /></ViewButton>
            <ViewButton aria-label="Layout view"><LayoutDoc /></ViewButton>
            <ViewButton aria-label="Design view"><DesignDoc /></ViewButton>
          </ViewButtons>
          <ZoomValue>120%</ZoomValue>
          <button aria-label="Zoom out"><RoundSign /></button>
          <ZoomSlider type="range" min="0" max="100" defaultValue="50" aria-label="Zoom" />
          <button aria-label="Zoom in"><RoundSign plus /></button>
        </StatusTools>
      </StatusBar>

      <TaskBar>
        <Wallpaper viewBox="0 0 1366 40" preserveAspectRatio="none">
          <defs>
            <linearGradient id="w1"><stop offset="0" stopColor="#b78a45" /><stop offset=".5" stopColor="#b9842f" /><stop offset="1" stopColor="#bf8a28" /></linearGradient>
            <linearGradient id="w2"><stop offset="0" stopColor="#b98528" /><stop offset=".4" stopColor="#b5812a" /><stop offset=".6" stopColor="#b3732a" /><stop offset="1" stopColor="#aa6827" /></linearGradient>
            <linearGradient id="w3"><stop offset="0" stopColor="#c3ac78" /><stop offset="1" stopColor="#bda279" /></linearGradient>
            <linearGradient id="w4"><stop offset="0" stopColor="#c39a3c" /><stop offset="1" stopColor="#b08a25" /></linearGradient>
          </defs>
          <path d="M0 0h445v40H0z" fill="url(#w1)" />
          <path d="M0 0h75L66 40H0z" fill="#c39a55" opacity=".5" />
          <path d="M442 0h252v40H398z" fill="url(#w2)" />
          <path d="M673 0h80v40h-86z" fill="#9a7b3c" />
          <path d="M751 0h615v40H759z" fill="url(#w3)" />
          <path d="M1172 0h194v40h-115c-25-18-50-31-79-40z" fill="url(#w4)" />
        </Wallpaper>
        <TaskButton $w={50} aria-label="Start"><WinLogo /></TaskButton>
        <TaskButton $w={64} aria-label="Internet Explorer"><IeIcon /></TaskButton>
        <TaskButton $w={58} $open aria-label="File Explorer"><FolderIcon /></TaskButton>
        <TaskButton $w={65} aria-label="Store"><StoreIcon /></TaskButton>
        <TaskButton $w={62} aria-label="Chrome"><ChromeIcon /></TaskButton>
        <TaskButton $w={59} $active aria-label="Access"><AccessIcon /></TaskButton>
        <Tray>
          <TrayItem $w={24} aria-label="Show hidden icons"><svg width="8" height="5" viewBox="0 0 8 5"><path d="M0 5h8L4 0z" fill="#fff" /></svg></TrayItem>
          <TrayItem $w={25} aria-label="Power">
            <svg width="16" height="16" viewBox="0 0 16 16"><path d="M8 2.500h7v12.500H8zM10 1.200h3" fill="none" stroke="#fff" strokeWidth="1.500" /><path d="M10 5h3v8h-3z" fill="#fff" /><path d="M1 3h5v4H1zM2 0v3M5 0v3M3.500 7v8" fill="#fff" stroke="#fff" /></svg>
          </TrayItem>
          <TrayItem $w={24} aria-label="Network">
            <svg width="16" height="12" viewBox="0 0 16 12"><path d="M0 9h2v3H0zM3.500 7h2v5h-2zM7 5h2v7H7zM10.500 2.500h2V12h-2zM14 0h2v12h-2z" fill="#fff" /></svg>
          </TrayItem>
          <TrayItem $w={25} aria-label="Volume">
            <svg width="15" height="14" viewBox="0 0 15 14"><path d="M0 4h3l4-4v14l-4-4H0z" fill="#fff" /><path d="M9 4.500c1 1.500 1 3.500 0 5M11 2.500c2 3 2 6 0 9" fill="none" stroke="#fff" /></svg>
          </TrayItem>
          <TrayItem $w={40}>ENG</TrayItem>
          <Clock dateTime="2023-04-28T02:22">02:22<br />2023-04-28</Clock>
        </Tray>
      </TaskBar>
    </Window>
  );
}
